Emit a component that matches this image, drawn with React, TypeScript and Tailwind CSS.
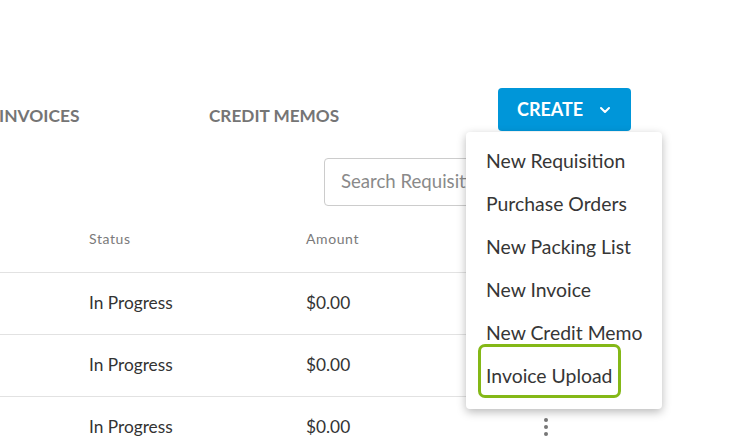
import React from "react";

const rows = [
  { status: "In Progress", amount: "$0.00" },
  { status: "In Progress", amount: "$0.00" },
  { status: "In Progress", amount: "$0.00" },
];

const items = [
  "New Requisition",
  "Purchase Orders",
  "New Packing List",
  "New Invoice",
  "New Credit Memo",
  "Invoice Upload",
];

export default function App() {
  return (
    <div
      className="relative w-[755px] h-[447px] overflow-hidden bg-white"
      style={{ fontFamily: "Lato, 'Open Sans', sans-serif" }}
    >
      <div className="pt-[88px]">
        {/* tabs + button */}
        <div className="flex items-start h-[43px]">
          <div className="flex items-center h-[56px] w-[498px]">
            <span className="text-[17.4px] font-bold text-[#757575] w-[210px] -ml-[1px]">
              INVOICES
            </span>
            <span className="text-[17.2px] font-bold text-[#757575]">
              CREDIT MEMOS
            </span>
          </div>
          <button className="w-[133px] h-[43px] bg-[#0096d9] rounded-[4px] flex items-center pl-[19px] text-white font-bold text-[18px]">
            CREATE
            <svg
              className="ml-[16px]"
              width="12"
              height="8"
              viewBox="0 0 12 8"
              fill="none"
            >
              <path
                d="M2 2l4 4 4-4"
                stroke="white"
                strokeWidth="2"
                strokeLinecap="round"
                strokeLinejoin="round"
              />
            </svg>
          </button>
        </div>

        {/* search */}
        <div className="pt-[27px] pl-[324px]">
          <div className="w-[300px] h-[48px] border border-[#cccccc] rounded-[4px] flex items-center pl-[16px] text-[18.6px] text-[#8a8a8a]">
            Search Requisitions
          </div>
        </div>

        {/* table */}
        <div className="w-[600px] pt-[14px]">
          <div className="flex items-start pt-[8px] h-[53px] text-[14px] text-[#7a7a7a] border-b border-[#e2e2e2]">
            <span className="ml-[89px] w-[217px] tracking-[0.6px]">Status</span>
            <span className="tracking-[0.6px]">Amount</span>
          </div>
          {rows.map((r, i) => (
            <div
              key={i}
              className="flex items-center h-[62px] pb-[1px] text-[17.3px] text-[#333333] border-b border-[#e2e2e2]"
            >
              <span className="ml-[89px] w-[217px]">{r.status}</span>
              <span className="w-[238px]">{r.amount}</span>
              <span className="flex flex-col gap-[3px]">
                <span className="w-[4px] h-[4px] rounded-full bg-[#777777]" />
                <span className="w-[4px] h-[4px] rounded-full bg-[#777777]" />
                <span className="w-[4px] h-[4px] rounded-full bg-[#777777]" />
              </span>
            </div>
          ))}
        </div>
      </div>

      {/* dropdown */}
      <div className="absolute left-[466px] top-[132px] w-[196px] h-[277px] bg-white rounded-[4px] shadow-[0_3px_10px_rgba(0,0,0,0.28)] pt-[7px]">
        {items.map((t) => (
          <div
            key={t}
            className="h-[43px] flex items-center pl-[20px] text-[19.4px] text-[#363636]"
          >
            {t}
          </div>
        ))}
        <div className="absolute left-[12px] top-[212px] w-[143px] h-[54px] border-[3px] border-[#84b817] rounded-[7px]" />
      </div>
    </div>
  );
}
